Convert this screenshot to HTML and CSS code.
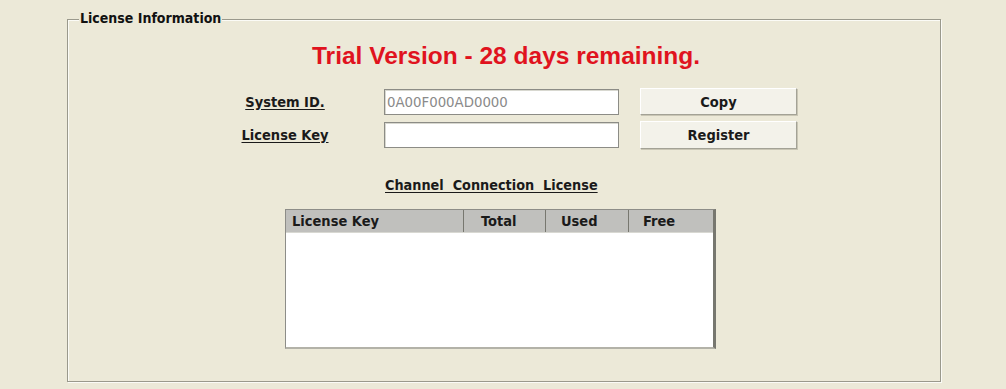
FILE: index.html
```html
<!DOCTYPE html>
<html>
<head>
<meta charset="utf-8">
<link rel="stylesheet" href="styles.css">
</head>
<body>
<div class="group">
  <span class="legend">License Information</span>
  <div class="title">Trial Version - 28 days remaining.</div>
  <div class="form">
    <div class="label">System ID.</div>
    <div class="input"><span class="value">0A00F000AD0000</span></div>
    <div class="btn">Copy</div>
    <div class="label">License Key</div>
    <div class="input"></div>
    <div class="btn">Register</div>
  </div>
  <div class="section">Channel&nbsp; Connection&nbsp; License</div>
  <div class="table">
    <div class="thead">
      <div class="th c1">License Key</div>
      <div class="th c2">Total</div>
      <div class="th c3">Used</div>
      <div class="th c4">Free</div>
    </div>
    <div class="tbody"></div>
  </div>
</div>
</body>
</html>
```
FILE: styles.css
```css
html, body {
  margin: 0;
  padding: 0;
}
body {
  background: #ECE9D8;
  width: 1006px;
  height: 389px;
  overflow: hidden;
  padding-top: 19px;
  box-sizing: border-box;
  font-family: "DejaVu Sans Condensed", "DejaVu Sans", sans-serif;
  font-stretch: condensed;
}
.group {
  position: relative;
  margin-left: 67px;
  width: 874px;
  height: 363px;
  box-sizing: border-box;
  border: 1px solid #9a998c;
  box-shadow: inset 1px 1px 0 #fbfbf6, 1px 1px 0 #fbfbf6;
  display: flex;
  flex-direction: column;
  align-items: flex-start;
}
.legend {
  position: absolute;
  top: -10px;
  left: 11px;
  padding: 0 1px;
  background: #ECE9D8;
  font-weight: bold;
  font-size: 14px;
  line-height: 16px;
  color: #111;
}
.title {
  margin-top: 22px;
  margin-left: 244px;
  font-family: "Liberation Sans", Arial, sans-serif;
  font-stretch: normal;
  font-weight: bold;
  font-size: 24.5px;
  line-height: 28px;
  color: #E0131E;
}
.form {
  margin-top: 18px;
  margin-left: 167px;
  display: grid;
  grid-template-columns: 100px 49px 235px 21px 157px;
  grid-template-rows: 27px 28px;
  row-gap: 6px;
  align-items: center;
}
.label {
  grid-column: 1;
  text-align: center;
  font-weight: bold;
  font-size: 14.5px;
  line-height: 16px;
  color: #1a1a1a;
  text-decoration: underline;
  text-underline-offset: 2px;
}
.input {
  grid-column: 3;
  height: 26px;
  box-sizing: border-box;
  background: #fff;
  border: 1px solid #8c8c86;
  box-shadow: inset 1px 1px 0 #d8d8d0;
  display: flex;
  align-items: center;
  padding-left: 2px;
}
.value {
  font-size: 14.8px;
  color: #8a8a8a;
}
.btn {
  grid-column: 5;
  height: 100%;
  box-sizing: border-box;
  background: #F3F2EA;
  border: 1px solid;
  border-color: #ffffff #a3a296 #a3a296 #ffffff;
  box-shadow: 1px 1px 0 #c9c6b5;
  display: flex;
  align-items: center;
  justify-content: center;
  font-weight: bold;
  font-size: 14.5px;
  color: #1a1a1a;
}
.section {
  margin-top: 28px;
  margin-left: 317px;
  font-weight: bold;
  font-size: 14.3px;
  line-height: 16px;
  color: #1a1a1a;
  text-decoration: underline;
  text-underline-offset: 2px;
}
.table {
  margin-top: 16px;
  margin-left: 217px;
  width: 431px;
  height: 140px;
  box-sizing: border-box;
  background: #fff;
  border: 1px solid #8d8d88;
  border-right: 3px solid #77776f;
  border-bottom: 2px solid #b3b2a8;
  display: flex;
  flex-direction: column;
}
.thead {
  display: flex;
  height: 22px;
  background: #C0C0BD;
  border-bottom: 1px solid #d8d8d2;
}
.th {
  box-sizing: border-box;
  height: 100%;
  border-right: 1px solid #77776f;
  display: flex;
  align-items: center;
  font-weight: bold;
  font-size: 14.5px;
  color: #1a1a1a;
}
.c1 { width: 178px; padding-left: 6px; }
.c2 { width: 82px; padding-left: 17px; }
.c3 { width: 83px; padding-left: 15px; }
.c4 { flex: 1; padding-left: 14px; border-right: none; }
.tbody {
  flex: 1;
}
```
